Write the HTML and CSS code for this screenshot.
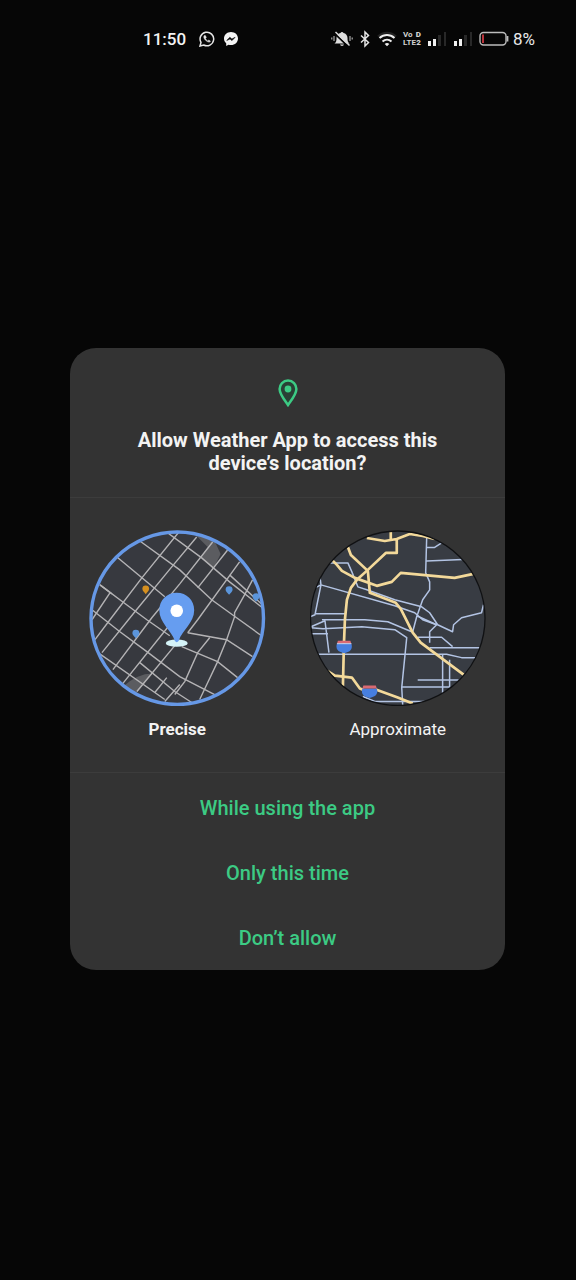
FILE: index.html
```html
<!DOCTYPE html>
<html lang="en">
<head>
<meta charset="utf-8">
<meta name="viewport" content="width=device-width, initial-scale=1">
<title>Location permission</title>
<link rel="stylesheet" href="styles.css">
</head>
<body>
<header class="status">
  <div class="status-group status-apps">
    <time class="clock">11:50</time>
    <svg width="16" height="16" viewBox="0 0 16 16" fill="none" stroke="#e6e6e6" stroke-width="1.5"><path d="M1 15l1-3.600A6.800 6.800 0 1 1 4.700 14Z"/><path d="M5.300 4.500c-1.300 1.500.2 3.900 1.600 5.100 1.500 1.300 3.600 2.200 4.600.7l-1.700-1.200-1 .8C7.700 9.400 6.900 8.500 6.500 7.500l.8-.9-.7-1.900Z" fill="#e6e6e6" stroke-width=".5"/></svg>
    <svg width="14" height="14" viewBox="0 0 14 14"><path d="M7 0C3 0 0 2.900 0 6.500c0 2 .8 3.700 2.200 4.800V14l2.300-1.200c.8.200 1.600.3 2.500.3 4 0 7-2.900 7-6.600S11 0 7 0Z" fill="#f4f4f4"/><path d="M2.800 8.500l3-3.200 2.100 1.700 3.200-1.700-3.100 3.300-2-1.700Z" fill="#080808" stroke="#080808" stroke-width=".6"/></svg>
  </div>
  <div class="status-group status-system">
    <svg width="22" height="18" viewBox="0 0 22 18"><path d="M3.500 13.500c1.800-1.400 2-2.800 2-5.500 0-2.700 1.700-4.500 4-5a1.600 1.600 0 0 1 3 0c2.300.5 4 2.300 4 5 0 2.700.2 4.100 2 5.500Z" fill="#ddd"/><path d="M9 14.500h4c-.4 1.900-3.600 1.900-4 0Z" fill="#ddd"/><path d="M4 3.800l13 12.500" stroke="#060606" stroke-width="1.800"/><path d="M4.500 2l14 13.500" stroke="#ddd" stroke-width="1.500"/><path d="M3 6v5M.800 7.500v2M19 6v5M21.200 7.500v2" stroke="#aaa" stroke-width="1.200"/></svg>
    <svg width="12" height="18" viewBox="0 0 12 18" fill="none" stroke="#e4e4e4" stroke-width="1.500"><path d="M2 5.500l7.500 7L6 16V2l3.500 3.500-7.500 7"/></svg>
    <svg width="20" height="18" viewBox="0 0 20 18" fill="none" stroke-width="2"><path d="M1 6.500c5-5 13-5 18 0" stroke="#222"/><path d="M2.500 8c4.300-4 10.700-4 15 0M5.500 11.500c2.600-2.300 6.400-2.300 9 0" stroke="#eee"/><path d="M7.700 14c1.400-1.200 3.200-1.200 4.600 0L10 16.300Z" fill="#eee"/></svg>
    <div class="volte"><span>Vo<b>D</b></span><span>LTE<b>2</b></span></div>
    <svg width="20" height="16" viewBox="0 0 20 16"><path d="M1 10h3v5H1zM6 8h3v7H6z" fill="#f0f0f0"/><path d="M11 4h3v11h-3zM17 1h2v14h-2z" fill="#282828"/></svg>
    <svg width="20" height="16" viewBox="0 0 20 16"><path d="M1 10h3v5H1zM6 8h3v7H6z" fill="#f0f0f0"/><path d="M11 4h3v11h-3zM17 1h2v14h-2z" fill="#282828"/></svg>
    <div class="status-group power">
      <svg width="30" height="16" viewBox="0 0 30 16"><rect x="1" y="1.500" width="26" height="12.500" rx="3.500" fill="none" stroke="#bcbcbc" stroke-width="1.400"/><path d="M28.500 5v5.500" stroke="#bcbcbc" stroke-width="1.800"/><path d="M3 3.500h2v8.500H3z" fill="#b9333b"/></svg>
      <span class="battery">8%</span>
    </div>
  </div>
</header>
<main class="screen">
  <section class="dialog" role="dialog" aria-labelledby="title">
    <div class="intro">
      <svg width="20" height="28" viewBox="0 0 20 28"><path d="M10 1.600c-4.800 0-8.400 3.700-8.400 8.400C1.600 15.500 7 21.500 10 26c3-4.500 8.400-10.500 8.400-16 0-4.700-3.600-8.400-8.400-8.400Z" fill="#204c36" fill-opacity=".55" stroke="#3ccb84" stroke-width="2.500"/><circle cx="10" cy="10" r="3.400" fill="#3ccb84"/></svg>
      <h1 class="title" id="title">Allow Weather App to access this device’s location?</h1>
    </div>
    <div class="choices" role="radiogroup" aria-labelledby="title">
      <label class="choice">
        <input class="choice-input" type="radio" name="accuracy" checked>
        <svg class="map" viewBox="89 530 177 177">
          <clipPath id="precise-clip"><circle cx="177.500" cy="618.500" r="87"/></clipPath>
          <circle cx="177.500" cy="618.500" r="87" fill="#37393f"/>
          <g clip-path="url(#precise-clip)">
            <path d="M194 533L215 541 221 554 214 568 201 557 208 547ZM122 688Q137 674 153 674L137 693 128 696Z" fill="#5b5c60"/>
            <g fill="none" stroke="#b4b3b5" stroke-width="1.400">
              <path d="M140 541L180 570 212 600 237 618 262 636M117 557L165 597M100 585L124 603 147 620 170 636M92 610L120 632 147 652 180 677 215 695M98 653L165 700M140 663L175 692 192 703M164 530L202 558 230 582 263 608M230 575L264 606"/>
              <path d="M180 531L142 578 110 620 95 640M197 537L172 567 135 612 102 653M110 593L92 620M213 542L180 584 152 618 113 670M228 550L198 588M170 625L122 685M240 562L198 620 188 633M175 646L137 692M167 678L155 693M180 685L165 702M253 580L245 595 235 613V617L227 640 218 662 200 700"/>
              <path d="M188 633L227 640 253 657M210 638L198 653 185 682 175 695M182 647L218 662 238 678M100 585L112 594"/>
            </g>
            <path d="M142.500 589a3.400 3.400 0 1 1 6.800 0c0 2.200-2 3.500-3.400 5.500-1.400-2-3.400-3.300-3.400-5.500Z" fill="#d7901f"/>
            <path d="M226 590a3.500 3.500 0 1 1 7 0c0 2-2 3-3.500 5-1.500-2-3.500-3-3.500-5ZM132.500 633.500a3.500 3.500 0 1 1 7 0c0 2-2 3-3.500 5-1.500-2-3.500-3-3.500-5ZM253 597a3.500 3.500 0 1 1 7 0c0 2-2 3-3.500 5-1.500-2-3.500-3-3.500-5Z" fill="#5b95db"/>
          </g>
          <ellipse cx="177" cy="643.500" rx="11" ry="3.700" fill="#d5f3f8"/>
          <path d="M177 593c-10 0-17.500 7.500-17.500 17.500 0 12.500 12 20 15.500 30.500q2 3 4 0c3.500-10.500 15.500-18 15.500-30.500 0-10-7.500-17.500-17.500-17.500Z" fill="#669df0"/>
          <circle cx="177" cy="611" r="6.300" fill="#fff"/>
          <circle cx="177.500" cy="618.500" r="86.500" fill="none" stroke="#6698e6" stroke-width="3.400"/>
        </svg>
        <span class="choice-name">Precise</span>
      </label>
      <label class="choice">
        <input class="choice-input" type="radio" name="accuracy">
        <svg class="map" viewBox="310 530 177 177">
          <clipPath id="area-clip"><circle cx="398" cy="618.500" r="87.500"/></clipPath>
          <circle cx="398" cy="618.500" r="87.500" fill="#383c43"/>
          <g clip-path="url(#area-clip)" fill="none" stroke-linejoin="round">
            <g stroke="#b3c4e4" stroke-width="1.500">
              <path d="M330 563H348L352 572 358 587 367 590 395 600 422 607 430 613 438 625 453 632 454 625 462 618 482 613 484 605"/>
              <path d="M320 577L321 585 395 606 415 613 423 620 437 625 430 632V643M311 590L321 585 315 615 310 617M316 614H345M322 620H365L388 622 412 632"/>
              <path d="M311 627L325 621 329 653M311 628L323 629 362 627 395 630 407 638 402 688 403 706M311 634H328M318 654.500H447L462 658H476"/>
              <path d="M427 538L426 573 430 582V590L423 600 417 617 413 632M417 616L437 625M427 547.500H435L442 543M427 561L463 559.500M418 637.500H442L453 647M430 648H481"/>
              <path d="M443 655V694M450 660V687.500H402M418 680.500H459M363 697L375 702H425"/>
            </g>
            <g stroke="#f3d99a" stroke-width="2.700">
              <path d="M367 538L385 541 397 539 410 534 423 536 435 539M391 530V540M397 539V553H386L368 570 357 580 351 588 347 600 345 620 344 645 343 687"/>
              <path d="M348 547L351 555 368 571 370 593 396 603 401 609 413 633 421 643 464 675M332 560L337 565 342 571 355 578 377 586 392 582 401 573 455 578 474 574"/>
              <path d="M327 671L335 676 352 678 360 689 370 693M376 690L398 698 413 704"/>
            </g>
          </g>
          <g><path d="M337 644H351.500C353 649 351 652 344.300 653.500 337.500 652 335.500 649 337 644Z" fill="#477fdf"/><path d="M338 641h12.500l1 3H337Z" fill="#d96a72"/><path d="M337 644h14.500" stroke="#c6d4ef"/></g>
          <g><path d="M362.500 689H377C378.500 694 376.500 697 369.800 698.500 363 697 361 694 362.500 689Z" fill="#477fdf"/><path d="M363.500 686h12.500l1 3H362.500Z" fill="#d96a72"/></g>
          <circle cx="398" cy="618.500" r="87.500" fill="none" stroke="#101113" stroke-width="1.300"/>
        </svg>
        <span class="choice-name">Approximate</span>
      </label>
    </div>
    <div class="actions">
      <button class="action" type="button">While using the app</button>
      <button class="action" type="button">Only this time</button>
      <button class="action" type="button">Don’t allow</button>
    </div>
  </section>
</main>
</body>
</html>
```
FILE: styles.css
```css
* {
  box-sizing: border-box;
}

body {
  margin: 0;
  min-height: 100vh;
  display: flex;
  flex-direction: column;
  background: #060606;
  color: #f3f3f3;
  font-family: Roboto, "Liberation Sans", sans-serif;
}

.status {
  height: 78px;
  padding: 0 41px 0 143px;
  display: flex;
  align-items: center;
  justify-content: space-between;
}

.status-group {
  display: flex;
  align-items: center;
}

.status-apps {
  gap: 9px;
}

.clock {
  margin-right: 4px;
  font-size: 17px;
  font-weight: 500;
}

.status-system {
  gap: 6px;
}

.volte {
  display: flex;
  flex-direction: column;
  width: 18px;
  font-size: 8px;
  line-height: 8px;
  font-weight: 700;
  color: #d2d2d2;
}

.volte span {
  display: flex;
  justify-content: space-between;
}

.power {
  gap: 4px;
}

.battery {
  font-size: 17px;
  color: #e8e8e8;
}

.screen {
  flex: 1;
  display: flex;
  align-items: center;
  padding: 0 71px 40px 70px;
}

.dialog {
  width: 100%;
  background: #333;
  border-radius: 26px;
  overflow: hidden;
}

.intro {
  display: flex;
  flex-direction: column;
  align-items: center;
  padding: 31px 64px 22px;
  border-bottom: 1px solid #3c3c3c;
}

.title {
  margin: 22px 0 0;
  font-size: 20px;
  line-height: 23px;
  font-weight: 700;
  text-align: center;
}

.choices {
  display: grid;
  grid-template-columns: 1fr 1fr;
  gap: 44px;
  padding: 32px 19px;
  border-bottom: 1px solid #3c3c3c;
}

.choice {
  display: flex;
  flex-direction: column;
  align-items: center;
  gap: 12px;
  cursor: pointer;
}

.choice-input {
  position: absolute;
  opacity: 0;
}

.map {
  display: block;
  width: 100%;
}

.choice-name {
  font-size: 17px;
  line-height: 22px;
}

.choice-input:checked ~ .choice-name {
  font-weight: 700;
}

.actions {
  display: flex;
  flex-direction: column;
  padding-top: 2px;
}

.action {
  height: 65px;
  border: 0;
  background: none;
  color: #3ccb84;
  font: 500 20px Roboto, "Liberation Sans", sans-serif;
  cursor: pointer;
}
```
